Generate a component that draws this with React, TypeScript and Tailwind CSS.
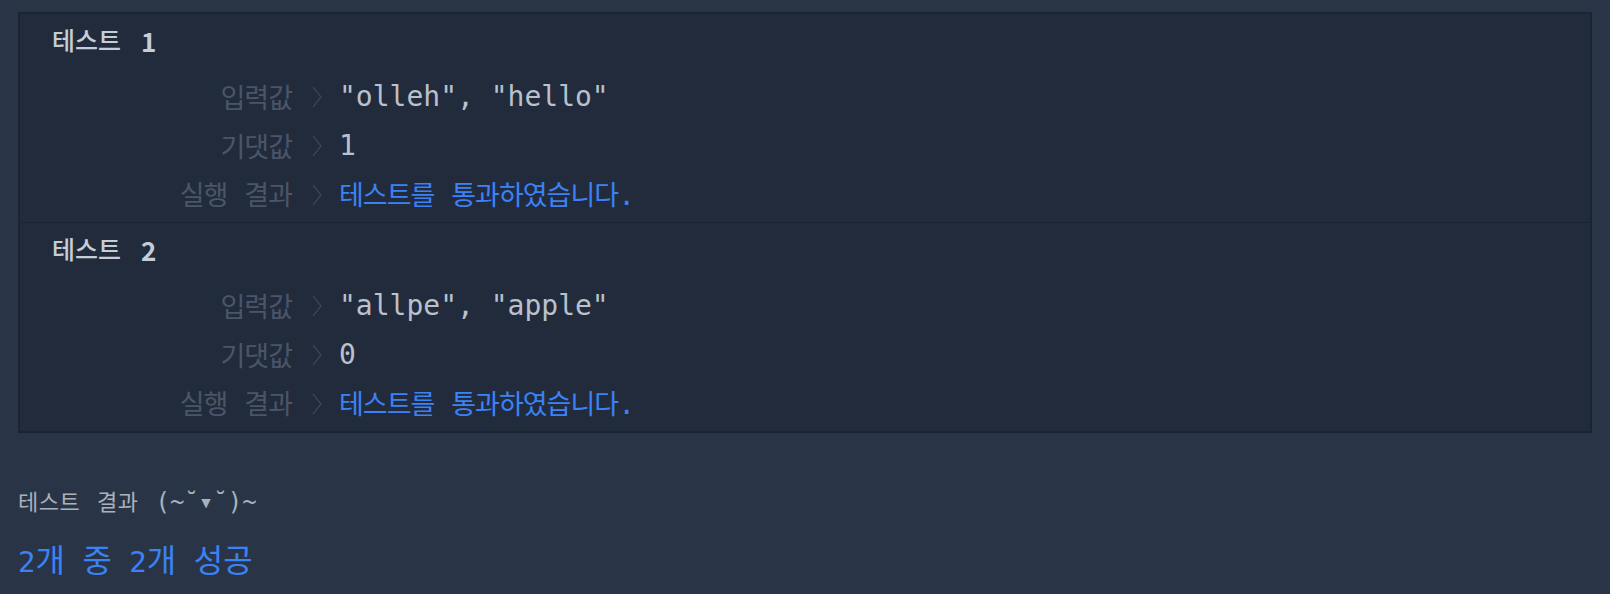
import React from "react";

const KO = "font-['Noto_Sans_CJK_KR',sans-serif]";
const MONO = "font-['DejaVu_Sans_Mono','Noto_Sans_CJK_KR',monospace]";

function Ko({ children }: { children: React.ReactNode }) {
  return <span className={`${KO} text-[27px] tracking-[-1px]`}>{children}</span>;
}

function Sp() {
  return <span className={`${MONO} text-[28px]`}> </span>;
}

function Chevron() {
  return (
    <svg width="12" height="24" viewBox="0 0 12 24" className="shrink-0 ml-[19px]">
      <polyline points="2,2 10,12 2,22" fill="none" stroke="#3a4558" strokeWidth="1.3" />
    </svg>
  );
}

function Row({ label, children }: { label: React.ReactNode; children: React.ReactNode }) {
  return (
    <div className="flex items-center h-[49px]">
      <div className="w-[272px] shrink-0 text-right whitespace-pre leading-none text-[#4b5568]">{label}</div>
      <Chevron />
      <div className="ml-[16px] whitespace-pre leading-none">{children}</div>
    </div>
  );
}

function Passed() {
  return (
    <span className="text-[#3b82f6]">
      <Ko>테스트를</Ko>
      <Sp />
      <Ko>통과하였습니다</Ko>
      <span className={`${MONO} text-[28px]`}>.</span>
    </span>
  );
}

function TestBlock({ n, input, expected }: { n: number; input: string; expected: string }) {
  return (
    <div className="pt-[10px] pb-[3px]">
      <div className="h-[32px] flex items-center pl-[32px] text-[#c6cdd8]">
        <span className={`${KO} text-[25px] font-medium`}>테스트</span>
        <span className={`${KO} text-[26px] font-semibold ml-[20px]`}>{n}</span>
      </div>
      <div className="mt-[16px]">
        <Row label={<Ko>입력값</Ko>}>
          <span className={`${MONO} text-[28px] text-[#b9c1cd]`}>{input}</span>
        </Row>
        <Row label={<Ko>기댓값</Ko>}>
          <span className={`${MONO} text-[28px] text-[#b9c1cd]`}>{expected}</span>
        </Row>
        <Row
          label={
            <>
              <Ko>실행</Ko>
              <Sp />
              <Ko>결과</Ko>
            </>
          }
        >
          <Passed />
        </Row>
      </div>
    </div>
  );
}

function K32({ children }: { children: React.ReactNode }) {
  return <span className={`${KO} text-[32px]`}>{children}</span>;
}

export default function App() {
  return (
    <div className="min-h-screen w-full bg-[#293546] pt-[12px]">
      <div className="mx-[18px] border-2 border-[#1c2433] bg-[#222b3c]">
        <TestBlock n={1} input={'"olleh", "hello"'} expected="1" />
        <div className="h-px bg-[#1a2130]" />
        <TestBlock n={2} input={'"allpe", "apple"'} expected="0" />
      </div>
      <div className="pl-[18px] pt-[52px]">
        <div className="h-[30px] leading-[30px] whitespace-pre text-[#a9b1bc]">
          <span className={`${KO} text-[22px] tracking-[0.5px]`}>테스트</span>
          <span className={`${MONO} text-[28px]`}> </span>
          <span className={`${KO} text-[22px] tracking-[0.5px]`}>결과</span>
          <span className={`${MONO} text-[28px]`}> </span>
          <span className={`${MONO} text-[24px]`}>(~˘▾˘)~</span>
        </div>
        <div className={`mt-[25px] h-[36px] leading-[36px] whitespace-pre ${MONO} text-[29px] text-[#3b82f6]`}>
          2<K32>개</K32> <K32>중</K32> 2<K32>개</K32> <K32>성공</K32>
        </div>
      </div>
    </div>
  );
}
